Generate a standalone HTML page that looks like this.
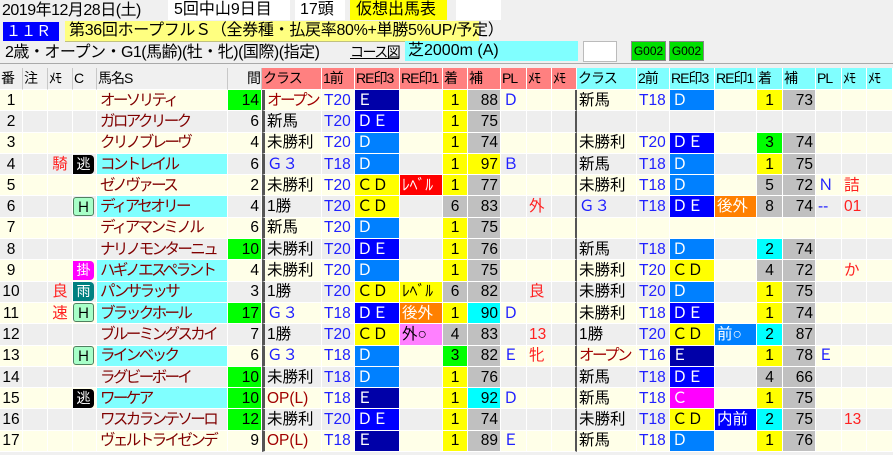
<!DOCTYPE html>
<html><head><meta charset="utf-8">
<style>
*{margin:0;padding:0;box-sizing:border-box}
body{width:893px;height:455px;overflow:hidden;background:#f0f0f0;font-family:"Liberation Sans","Noto Sans CJK JP",sans-serif;font-size:15px;color:#000;position:relative}
.a{position:absolute;white-space:nowrap;line-height:19px;height:19px}
table{position:absolute;left:0;top:68px;border-collapse:separate;border-spacing:0;table-layout:fixed;width:893px}
td{border-right:1px solid #fff;border-bottom:1px solid #fff;height:21.3px;line-height:19px;white-space:nowrap;overflow:hidden;padding:0 2px;font-size:15.5px}
tr.h td{height:22px;background:#f0f0f0;border-right:1px solid #c8c8c8;padding:0 1px;font-size:14px;letter-spacing:-1px}
tr.h td.rh{background:#ff8080;border-right:1px solid #fff}
tr.h td.ch{background:#80ffff;border-right:1px solid #fff}
tr.o td{background:#ffffe8}
tr.v td{background:#eeeeee}
.n{color:#800000;letter-spacing:-2.6px;padding-left:3px}
tr td.nc{background:#80ffff}
.t{color:#2020ff}
.r{text-align:right}
.c{text-align:center}
.red{color:#ff2020}
.blu{color:#2020ff}
.dr{color:#a00000}
.op{letter-spacing:-2.5px}
tr td.Y{background:#ffff00}
tr td.G{background:#c0c0c0}
tr td.GR{background:#00ff00}
tr td.CY{background:#00ffff}
tr td.E{background:#0000a8;color:#fff}
tr td.DE{background:#0000ff;color:#fff}
tr td.D{background:#0080ff;color:#fff}
tr td.CD{background:#ffff00;color:#000}
tr td.C{background:#ff00ff;color:#fff}
tr td.LV{background:#ff0000;color:#fff}
tr td.GO{background:#ff8000;color:#fff}
tr td.PK{background:#ff80ff;color:#000}
tr td.MO{background:#0080ff;color:#fff}
tr td.UI{background:#0000ff;color:#fff}
.sep{border-left:3px solid #555}
.sepl{border-right:2px solid #555 !important}
.bd{display:inline-block;width:21px;height:19px;line-height:19px;text-align:center;border-radius:0 4px 4px 0;font-size:14px}
.b1{background:#000;color:#fff}
.b2{background:#a8ffc8;color:#000;border:1px solid #508060;border-radius:3px}
.b3{background:#ff00ff;color:#fff}
.b4{background:#008080;color:#fff}
</style></head><body>
<div class="a" style="left:2px;top:1px;font-size:16px;letter-spacing:-0.5px">2019年12月28日(土)</div>
<div class="a" style="left:168px;top:0;width:122px;height:20px;background:#fff;padding-left:6px;font-size:16px">5回中山9日目</div>
<div class="a" style="left:295px;top:0;width:50px;height:20px;background:#fff;padding-left:5px;font-size:16px">17頭</div>
<div class="a" style="left:350px;top:0;width:97px;height:20px;background:#ffff00;padding-left:6px;font-size:16px">仮想出馬表</div>
<div class="a" style="left:456px;top:0;width:45px;height:20px;background:#fff"></div>
<div class="a" style="left:3px;top:22px;width:56px;height:19px;background:#0000ff;color:#fff;padding-left:3px;font-size:15px">１１Ｒ</div>
<div class="a" style="left:65px;top:21px;width:414px;height:21px;background:#ffff80;padding-left:4px;font-size:16px;letter-spacing:-0.3px;border-bottom:1px solid #c0c080">第36回ホープフルＳ（全券種・払戻率80%+単勝5%UP/予定）</div>
<div class="a" style="left:5px;top:43px;font-size:16px;letter-spacing:-0.5px">2歳・オープン・G1(馬齢)(牡・牝)(国際)(指定)</div>
<div class="a" style="left:350px;top:43px;font-size:14px;letter-spacing:-1.5px;text-decoration:underline">コース図</div>
<div class="a" style="left:405px;top:41px;width:173px;height:20px;background:#80ffff;padding-left:3px;font-size:16px">芝2000m (A)</div>
<div class="a" style="left:583px;top:41px;width:34px;height:21px;background:#fff;border:1px solid #bbb"></div>
<div class="a" style="left:631px;top:41px;width:35px;height:20px;background:#00e000;border:1px solid #888;font-size:12px;line-height:18px;text-align:center">G002</div>
<div class="a" style="left:669px;top:41px;width:35px;height:20px;background:#00e000;border:1px solid #888;font-size:12px;line-height:18px;text-align:center">G002</div>
<div class="a" style="left:0;top:63px;width:893px;height:1px;background:#aaa"></div>
<table>
<colgroup><col style="width:23px"><col style="width:25px"><col style="width:25px"><col style="width:24px"><col style="width:131px"><col style="width:34px"><col style="width:60px"><col style="width:33px"><col style="width:45px"><col style="width:43px"><col style="width:25px"><col style="width:33px"><col style="width:26px"><col style="width:25px"><col style="width:25px"><col style="width:60px"><col style="width:33px"><col style="width:45px"><col style="width:42px"><col style="width:26px"><col style="width:33px"><col style="width:26px"><col style="width:25px"><col style="width:26px"></colgroup>
<tr class="h"><td>番</td><td>注</td><td>ﾒﾓ</td><td>C</td><td>馬名S</td><td class="r">間</td><td class="rh">クラス</td><td class="rh">1前</td><td class="rh">RE印3</td><td class="rh">RE印1</td><td class="rh">着</td><td class="rh">補</td><td class="rh">PL</td><td class="rh">ﾒﾓ</td><td class="rh">ﾒﾓ</td><td class="ch">クラス</td><td class="ch">2前</td><td class="ch">RE印3</td><td class="ch">RE印1</td><td class="ch">着</td><td class="ch">補</td><td class="ch">PL</td><td class="ch">ﾒﾓ</td><td class="ch">ﾒﾓ</td></tr>
<tr class="o"><td class="c">1</td><td></td><td></td><td></td><td class="n">オーソリティ</td><td class="r GR">14</td><td class="dr sep op">オープン</td><td class="t">T20</td><td class="E">Ｅ</td><td></td><td class="c Y">1</td><td class="r G">88</td><td class="blu">Ｄ</td><td></td><td class="sepl"></td><td>新馬</td><td class="t">T18</td><td class="D">Ｄ</td><td></td><td class="c Y">1</td><td class="r G">73</td><td></td><td></td><td></td></tr>
<tr class="v"><td class="c">2</td><td></td><td></td><td></td><td class="n">ガロアクリーク</td><td class="r">6</td><td class="sep">新馬</td><td class="t">T20</td><td class="DE">ＤＥ</td><td></td><td class="c Y">1</td><td class="r G">75</td><td></td><td></td><td class="sepl"></td><td></td><td></td><td></td><td></td><td></td><td></td><td></td><td></td><td></td></tr>
<tr class="o"><td class="c">3</td><td></td><td></td><td></td><td class="n">クリノブレーヴ</td><td class="r">4</td><td class="sep">未勝利</td><td class="t">T20</td><td class="D">Ｄ</td><td></td><td class="c Y">1</td><td class="r G">74</td><td></td><td></td><td class="sepl"></td><td>未勝利</td><td class="t">T20</td><td class="DE">ＤＥ</td><td></td><td class="c GR">3</td><td class="r G">74</td><td></td><td></td><td></td></tr>
<tr class="v"><td class="c">4</td><td></td><td class="red c">騎</td><td style="padding:0"><span class="bd b1">逃</span></td><td class="n nc">コントレイル</td><td class="r">6</td><td class="blu sep">Ｇ３</td><td class="t">T18</td><td class="D">Ｄ</td><td></td><td class="c Y">1</td><td class="r Y">97</td><td class="blu">Ｂ</td><td></td><td class="sepl"></td><td>新馬</td><td class="t">T18</td><td class="D">Ｄ</td><td></td><td class="c Y">1</td><td class="r G">75</td><td></td><td></td><td></td></tr>
<tr class="o"><td class="c">5</td><td></td><td></td><td></td><td class="n">ゼノヴァース</td><td class="r">2</td><td class="sep">未勝利</td><td class="t">T20</td><td class="CD">ＣＤ</td><td class="LV">ﾚﾍﾞﾙ</td><td class="c Y">1</td><td class="r G">77</td><td></td><td></td><td class="sepl"></td><td>未勝利</td><td class="t">T18</td><td class="D">Ｄ</td><td></td><td class="c G">5</td><td class="r G">72</td><td class="blu">Ｎ</td><td class="red">詰</td><td></td></tr>
<tr class="v"><td class="c">6</td><td></td><td></td><td style="padding:0"><span class="bd b2">Ｈ</span></td><td class="n nc">ディアセオリー</td><td class="r">4</td><td class="sep">1勝</td><td class="t">T20</td><td class="CD">ＣＤ</td><td></td><td class="c G">6</td><td class="r G">83</td><td></td><td class="red">外</td><td class="sepl"></td><td class="blu">Ｇ３</td><td class="t">T18</td><td class="DE">ＤＥ</td><td class="GO">後外</td><td class="c G">8</td><td class="r G">74</td><td class="blu">--</td><td class="red">01</td><td></td></tr>
<tr class="o"><td class="c">7</td><td></td><td></td><td></td><td class="n">ディアマンミノル</td><td class="r">6</td><td class="sep">新馬</td><td class="t">T20</td><td class="D">Ｄ</td><td></td><td class="c Y">1</td><td class="r G">75</td><td></td><td></td><td class="sepl"></td><td></td><td></td><td></td><td></td><td></td><td></td><td></td><td></td><td></td></tr>
<tr class="v"><td class="c">8</td><td></td><td></td><td></td><td class="n">ナリノモンターニュ</td><td class="r GR">10</td><td class="sep">未勝利</td><td class="t">T20</td><td class="DE">ＤＥ</td><td></td><td class="c Y">1</td><td class="r G">76</td><td></td><td></td><td class="sepl"></td><td>新馬</td><td class="t">T18</td><td class="D">Ｄ</td><td></td><td class="c CY">2</td><td class="r G">74</td><td></td><td></td><td></td></tr>
<tr class="o"><td class="c">9</td><td></td><td></td><td style="padding:0"><span class="bd b3">掛</span></td><td class="n nc">ハギノエスペラント</td><td class="r">4</td><td class="sep">未勝利</td><td class="t">T20</td><td class="D">Ｄ</td><td></td><td class="c Y">1</td><td class="r G">75</td><td></td><td></td><td class="sepl"></td><td>未勝利</td><td class="t">T20</td><td class="CD">ＣＤ</td><td></td><td class="c G">4</td><td class="r G">72</td><td></td><td class="red">か</td><td></td></tr>
<tr class="v"><td class="c">10</td><td></td><td class="red c">良</td><td style="padding:0"><span class="bd b4">雨</span></td><td class="n nc">パンサラッサ</td><td class="r">3</td><td class="sep">1勝</td><td class="t">T20</td><td class="CD">ＣＤ</td><td class="CD">ﾚﾍﾞﾙ</td><td class="c G">6</td><td class="r G">82</td><td></td><td class="red">良</td><td class="sepl"></td><td>未勝利</td><td class="t">T20</td><td class="D">Ｄ</td><td></td><td class="c Y">1</td><td class="r G">75</td><td></td><td></td><td></td></tr>
<tr class="o"><td class="c">11</td><td></td><td class="red c">速</td><td style="padding:0"><span class="bd b2">Ｈ</span></td><td class="n nc">ブラックホール</td><td class="r GR">17</td><td class="blu sep">Ｇ３</td><td class="t">T18</td><td class="DE">ＤＥ</td><td class="GO">後外</td><td class="c Y">1</td><td class="r CY">90</td><td class="blu">Ｄ</td><td></td><td class="sepl"></td><td>未勝利</td><td class="t">T18</td><td class="DE">ＤＥ</td><td></td><td class="c Y">1</td><td class="r G">74</td><td></td><td></td><td></td></tr>
<tr class="v"><td class="c">12</td><td></td><td></td><td></td><td class="n">ブルーミングスカイ</td><td class="r">7</td><td class="sep">1勝</td><td class="t">T20</td><td class="CD">ＣＤ</td><td class="PK">外○</td><td class="c G">4</td><td class="r G">83</td><td></td><td class="red">13</td><td class="sepl"></td><td>1勝</td><td class="t">T20</td><td class="CD">ＣＤ</td><td class="MO">前○</td><td class="c CY">2</td><td class="r G">87</td><td></td><td></td><td></td></tr>
<tr class="o"><td class="c">13</td><td></td><td></td><td style="padding:0"><span class="bd b2">Ｈ</span></td><td class="n nc">ラインベック</td><td class="r">6</td><td class="blu sep">Ｇ３</td><td class="t">T18</td><td class="D">Ｄ</td><td></td><td class="c GR">3</td><td class="r G">82</td><td class="blu">Ｅ</td><td class="red">牝</td><td class="sepl"></td><td class="dr op">オープン</td><td class="t">T16</td><td class="E">Ｅ</td><td></td><td class="c Y">1</td><td class="r G">78</td><td class="blu">Ｅ</td><td></td><td></td></tr>
<tr class="v"><td class="c">14</td><td></td><td></td><td></td><td class="n">ラグビーボーイ</td><td class="r GR">10</td><td class="sep">未勝利</td><td class="t">T18</td><td class="D">Ｄ</td><td></td><td class="c Y">1</td><td class="r G">76</td><td></td><td></td><td class="sepl"></td><td>新馬</td><td class="t">T18</td><td class="DE">ＤＥ</td><td></td><td class="c G">4</td><td class="r G">66</td><td></td><td></td><td></td></tr>
<tr class="o"><td class="c">15</td><td></td><td></td><td style="padding:0"><span class="bd b1">逃</span></td><td class="n nc">ワーケア</td><td class="r GR">10</td><td class="dr sep">OP(L)</td><td class="t">T18</td><td class="E">Ｅ</td><td></td><td class="c Y">1</td><td class="r CY">92</td><td class="blu">Ｄ</td><td></td><td class="sepl"></td><td>新馬</td><td class="t">T18</td><td class="C">Ｃ</td><td></td><td class="c Y">1</td><td class="r G">75</td><td></td><td></td><td></td></tr>
<tr class="v"><td class="c">16</td><td></td><td></td><td></td><td class="n">ワスカランテソーロ</td><td class="r GR">12</td><td class="sep">未勝利</td><td class="t">T20</td><td class="DE">ＤＥ</td><td></td><td class="c Y">1</td><td class="r G">74</td><td></td><td></td><td class="sepl"></td><td>未勝利</td><td class="t">T18</td><td class="CD">ＣＤ</td><td class="UI">内前</td><td class="c CY">2</td><td class="r G">75</td><td></td><td class="red">13</td><td></td></tr>
<tr class="o"><td class="c">17</td><td></td><td></td><td></td><td class="n">ヴェルトライゼンデ</td><td class="r">9</td><td class="dr sep">OP(L)</td><td class="t">T18</td><td class="E">Ｅ</td><td></td><td class="c Y">1</td><td class="r G">89</td><td class="blu">Ｅ</td><td></td><td class="sepl"></td><td>新馬</td><td class="t">T18</td><td class="D">Ｄ</td><td></td><td class="c Y">1</td><td class="r G">76</td><td></td><td></td><td></td></tr>
</table>
</body></html>
